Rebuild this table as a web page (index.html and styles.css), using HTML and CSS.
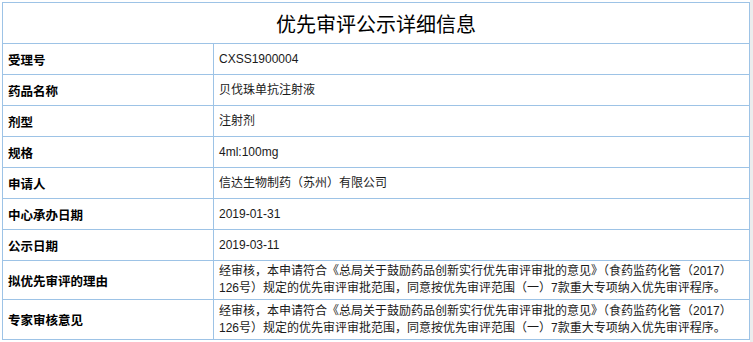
FILE: index.html
```html
<!DOCTYPE html>
<html>
<head>
    <meta charset="utf-8">
    <title>优先审评公示详细信息</title>
    <link rel="stylesheet" href="styles.css">
</head>
<body>
    <div class="page">
        <table class="detail">
            <colgroup>
                <col class="col-label">
                <col class="col-value">
            </colgroup>
            <tr>
                <th colspan="2" class="title">优先审评公示详细信息</th>
            </tr>
            <tr>
                <td class="label">受理号</td>
                <td class="value">CXSS1900004</td>
            </tr>
            <tr>
                <td class="label">药品名称</td>
                <td class="value">贝伐珠单抗注射液</td>
            </tr>
            <tr>
                <td class="label">剂型</td>
                <td class="value">注射剂</td>
            </tr>
            <tr>
                <td class="label">规格</td>
                <td class="value">4ml:100mg</td>
            </tr>
            <tr>
                <td class="label">申请人</td>
                <td class="value">信达生物制药（苏州）有限公司</td>
            </tr>
            <tr>
                <td class="label">中心承办日期</td>
                <td class="value">2019-01-31</td>
            </tr>
            <tr>
                <td class="label">公示日期</td>
                <td class="value">2019-03-11</td>
            </tr>
            <tr class="long">
                <td class="label">拟优先审评的理由</td>
                <td class="value">经审核，本申请符合《总局关于鼓励药品创新实行优先审评审批的意见》（食药监药化管（2017）126号）规定的优先审评审批范围，同意按优先审评范围（一）7款重大专项纳入优先审评程序。</td>
            </tr>
            <tr class="long last">
                <td class="label">专家审核意见</td>
                <td class="value">经审核，本申请符合《总局关于鼓励药品创新实行优先审评审批的意见》（食药监药化管（2017）126号）规定的优先审评审批范围，同意按优先审评范围（一）7款重大专项纳入优先审评程序。</td>
            </tr>
        </table>
    </div>
</body>
</html>
```

FILE: styles.css
```css
html {
    background-color: #ececec;
}

body {
    margin: 0;
    font-family: "Liberation Sans", Arial, "Noto Sans CJK SC", sans-serif;
    font-size: 12px;
    color: #1a1a1a;
}

.page {
    width: 750px;
    height: 342px;
    background-color: #fff;
    padding: 2px 0 0 2px;
    box-sizing: border-box;
}

.detail {
    width: 748px;
    border-collapse: collapse;
    table-layout: fixed;
}

.col-label {
    width: 211px;
}

.detail th,
.detail td {
    border: 1px solid #9dc3e6;
}

.title {
    height: 40px;
    padding: 0;
    font-size: 20px;
    font-weight: normal;
    color: #000;
    text-align: center;
}

.label {
    height: 30px;
    padding: 0 0 0 5px;
    font-size: 12.5px;
    font-weight: bold;
    color: #000;
}

.value {
    height: 30px;
    padding: 0 3px 0 5px;
    line-height: 17px;
}

.long .value {
    height: 34px;
    padding-top: 2px;
    padding-bottom: 2px;
}

.last .value {
    height: 35px;
}
```
